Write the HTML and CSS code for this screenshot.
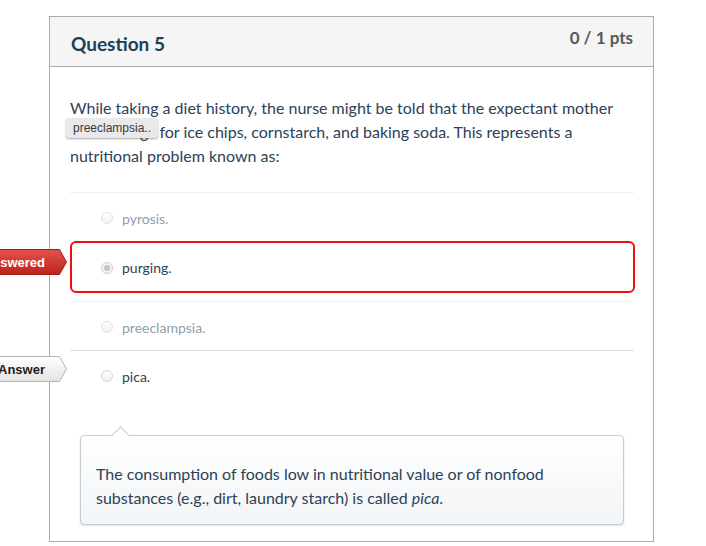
FILE: index.html
```html
<!DOCTYPE html>
<html lang="en">
<head>
<meta charset="utf-8">
<title>Question 5</title>
<link rel="stylesheet" href="styles.css">
</head>
<body>
<div class="page">
  <div class="card">
    <div class="card-header">
      <h2 class="title">Question 5</h2>
      <span class="pts">0 / 1 pts</span>
    </div>
    <div class="card-body">
      <div class="question-text">
        <p>While taking a diet history, the nurse might be told that the expectant mother has cravings for ice chips, cornstarch, and baking soda. This represents a nutritional problem known as:</p>
        <span class="tip">preeclampsia..</span>
      </div>
      <div class="answers">
        <div class="answer disabled">
          <span class="radio"></span><span class="label">pyrosis.</span>
        </div>
        <div class="answer wrong">
          <div class="badge badge-wrong">
            <svg class="badge-shape" width="127" height="26" viewBox="0 0 127 26">
              <defs>
                <linearGradient id="gRed" x1="0" y1="0" x2="0" y2="1">
                  <stop offset="0" stop-color="#e5524b"/>
                  <stop offset="1" stop-color="#bb231d"/>
                </linearGradient>
              </defs>
              <polygon points="0.5,0.5 119.5,0.5 126.5,13 119.5,25.5 0.5,25.5" fill="url(#gRed)" stroke="#a61c17"/>
            </svg>
            <span class="badge-text">You Answered</span>
          </div>
          <span class="radio checked"></span><span class="label">purging.</span>
        </div>
        <div class="answer disabled">
          <span class="radio"></span><span class="label">preeclampsia.</span>
        </div>
        <div class="answer correct">
          <div class="badge badge-correct">
            <svg class="badge-shape" width="127" height="26" viewBox="0 0 127 26">
              <defs>
                <linearGradient id="gGray" x1="0" y1="0" x2="0" y2="1">
                  <stop offset="0" stop-color="#ffffff"/>
                  <stop offset="1" stop-color="#e3e3e3"/>
                </linearGradient>
              </defs>
              <polygon points="0.5,0.5 119.5,0.5 126.5,13 119.5,25.5 0.5,25.5" fill="url(#gGray)" stroke="#b5b5b5"/>
            </svg>
            <span class="badge-text">Correct Answer</span>
          </div>
          <span class="radio"></span><span class="label">pica.</span>
        </div>
      </div>
      <div class="comment">
        <p>The consumption of foods low in nutritional value or of nonfood substances (e.g., dirt, laundry starch) is called <em>pica</em>.</p>
      </div>
    </div>
  </div>
</div>
</body>
</html>
```

FILE: styles.css
```css
html, body {
  margin: 0;
  padding: 0;
  background: #ffffff;
}

body {
  font-family: Lato, "Noto Sans", sans-serif;
  color: #2c4257;
}

.page {
  padding: 16px 0 0 49px;
}

.card {
  width: 605px;
  box-sizing: border-box;
  border: 1px solid #ababab;
  background: #ffffff;
}

.card-header {
  display: flex;
  justify-content: space-between;
  align-items: flex-start;
  height: 50px;
  box-sizing: border-box;
  padding: 0 20px 0 21px;
  background: #f5f5f5;
  border-bottom: 1px solid #ababab;
}

.title {
  margin: 16px 0 0;
  font-size: 19px;
  line-height: 1.2;
  font-weight: 700;
  color: #203f58;
}

.pts {
  margin-top: 11px;
  font-size: 17px;
  line-height: 1.2;
  font-weight: 700;
  color: #585858;
}

.card-body {
  padding: 29px 19px 16px 20px;
}

.question-text {
  position: relative;
}

.question-text p {
  margin: 0 0 24px;
  font-size: 16px;
  line-height: 24px;
}

.tip {
  position: absolute;
  left: -4px;
  top: 22px;
  height: 20px;
  padding: 0 7px 0 7px;
  box-sizing: border-box;
  display: flex;
  align-items: center;
  font-family: "Liberation Sans", Arial, sans-serif;
  font-size: 12px;
  color: #3a3a3a;
  background: #e9e9e9;
  border-radius: 3px;
  box-shadow: 0 1px 2px rgba(0, 0, 0, 0.35);
}

.answer {
  position: relative;
  display: flex;
  align-items: center;
  gap: 9px;
  height: 49px;
  box-sizing: border-box;
  padding: 2px 0 0 31px;
  border-top: 1px solid #eeeeee;
  font-size: 14px;
}

.answer.wrong {
  height: 52px;
  margin: 0 -1px 8px 0;
  padding: 1px 0 0 29px;
  border: 2px solid #f50c0c;
  border-radius: 6px;
}

.answer.correct {
  border-top-color: #dcdcdc;
}

.answer.disabled .label {
  color: #8ea0ae;
}

.radio {
  position: relative;
  flex: none;
  width: 12px;
  height: 12px;
  box-sizing: border-box;
  border-radius: 50%;
  border: 1px solid #d2d2d2;
  background: linear-gradient(#ffffff, #f1f1f1);
}

.answer.disabled .radio {
  border-color: #e2e2e2;
}

.radio.checked {
  border-color: #cacaca;
  background: #f4f4f4;
}

.radio.checked::after {
  content: "";
  position: absolute;
  left: 2px;
  top: 2px;
  width: 6px;
  height: 6px;
  border-radius: 50%;
  background: #c4c4c4;
}

.badge {
  position: absolute;
  width: 127px;
  height: 26px;
  box-sizing: border-box;
  padding-right: 22px;
  display: flex;
  align-items: center;
  justify-content: flex-end;
  white-space: nowrap;
}

.badge-wrong {
  left: -132px;
  top: 6px;
}

.badge-correct {
  left: -130px;
  top: 5px;
}

.badge-shape {
  position: absolute;
  left: 0;
  top: 0;
}

.badge-text {
  position: relative;
  font-family: "Liberation Sans", Arial, sans-serif;
  font-size: 13px;
  font-weight: 700;
}

.badge-wrong .badge-text {
  color: #ffffff;
}

.badge-correct .badge-text {
  color: #1e1e1e;
}

.comment {
  position: relative;
  margin: 36px 10px 0;
  padding: 26px 15px 14px;
  border: 1px solid #c5ccd2;
  border-radius: 4px;
  background: linear-gradient(#ffffff, #f2f4f6);
  box-shadow: 0 1px 2px rgba(0, 0, 0, 0.12);
}

.comment::before {
  content: "";
  position: absolute;
  left: 33px;
  top: -7px;
  width: 12px;
  height: 12px;
  background: #ffffff;
  border-left: 1px solid #c5ccd2;
  border-top: 1px solid #c5ccd2;
  transform: rotate(45deg);
}

.comment p {
  margin: 0;
  font-size: 16px;
  line-height: 24px;
}
```
